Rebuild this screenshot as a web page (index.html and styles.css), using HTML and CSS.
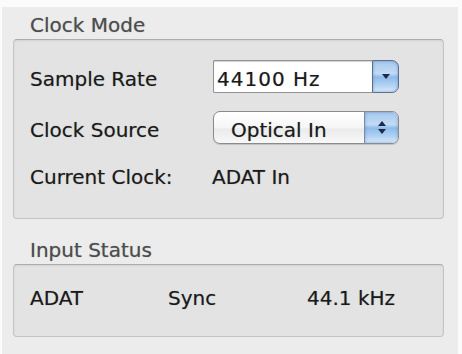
FILE: index.html
```html
<!DOCTYPE html>
<html lang="en">
<head>
    <meta charset="UTF-8">
    <meta name="viewport" content="width=device-width, initial-scale=1.0">
    <title>Clock Mode</title>
    <link rel="stylesheet" href="styles.css">
</head>
<body>
    <div class="panel">
        <div class="group-title">Clock Mode</div>
        <div class="group-box clock-box">
            <div class="field-row">
                <span class="label">Sample Rate</span>
                <div class="combo">
                    <span class="combo-value">44100 Hz</span>
                    <span class="aqua-btn combo-btn">
                        <svg width="8" height="5" viewBox="0 0 8 5"><polygon points="0,0 8,0 4,5" fill="#1c2a48"/></svg>
                    </span>
                </div>
            </div>
            <div class="field-row">
                <span class="label">Clock Source</span>
                <div class="popup">
                    <span class="popup-value">Optical In</span>
                    <span class="aqua-btn popup-btn">
                        <svg width="8" height="13" viewBox="0 0 8 13"><polygon points="0,5 8,5 4,0" fill="#1c2a48"/><polygon points="0,8 8,8 4,13" fill="#1c2a48"/></svg>
                    </span>
                </div>
            </div>
            <div class="field-row info-row">
                <span class="label">Current Clock:</span>
                <span class="value">ADAT In</span>
            </div>
        </div>

        <div class="group-title status-title">Input Status</div>
        <div class="group-box status-box">
            <span>ADAT</span>
            <span>Sync</span>
            <span>44.1 kHz</span>
        </div>
    </div>
</body>
</html>
```

FILE: styles.css
```css
* {
    box-sizing: border-box;
}

body {
    margin: 0;
    background: #fbfbfb;
    font-family: 'DejaVu Sans', 'Liberation Sans', sans-serif;
    font-size: 20px;
    line-height: 23px;
    color: #1a1a1a;
    text-shadow: 0 0 1px rgba(0, 0, 0, 0.35);
}

.panel {
    margin: 7px 0 0 2px;
    width: 456px;
    height: 347px;
    padding-top: 7px;
    background: #ececec;
}

.group-title {
    padding-left: 28px;
    margin-bottom: 2px;
    color: #4d4d4d;
}

.status-title {
    margin-top: 20px;
}

.group-box {
    margin-left: 11px;
    width: 431px;
    background: #e3e3e3;
    border: 1px solid #c4c4c4;
    border-top-color: #acacac;
    border-radius: 4px;
    box-shadow: inset 0 1px 2px rgba(0, 0, 0, 0.08);
}

.clock-box {
    display: flex;
    flex-direction: column;
    gap: 18px;
    padding: 20px 0 29px 16px;
}

.field-row {
    display: flex;
    align-items: baseline;
}

.label {
    width: 183px;
    flex-shrink: 0;
}

.info-row {
    padding-top: 4px;
}

.value {
    margin-left: -1px;
}

/* editable combo: white field + blue arrow cap */
.combo {
    display: flex;
    width: 186px;
    height: 33px;
}

.combo-value {
    flex: 1;
    padding: 7px 0 0 3px;
    background: #fff;
    border: 1px solid #939393;
    border-right: none;
    border-radius: 2px 0 0 2px;
    box-shadow: inset 0 1px 1px rgba(0, 0, 0, 0.18);
    letter-spacing: 1px;
}

.aqua-btn {
    display: flex;
    align-items: center;
    justify-content: center;
    background: linear-gradient(#a7c8ee 0%, #c2dbf5 40%, #8fbbea 52%, #b4d4f4 80%, #d8ebfc 100%);
}

.combo-btn {
    width: 27px;
    border: 1px solid #5e6f8c;
    border-radius: 0 7px 7px 0;
    box-shadow: inset 0 0 3px rgba(60, 100, 170, 0.5);
}

/* popup button */
.popup {
    display: flex;
    width: 186px;
    height: 33px;
    border: 1px solid #8b8b8b;
    border-radius: 7px;
    overflow: hidden;
    background: linear-gradient(#ffffff 0%, #f6f6f6 50%, #ebebeb 55%, #f8f8f8 100%);
    box-shadow: 0 1px 1px rgba(0, 0, 0, 0.15);
}

.popup-value {
    flex: 1;
    padding: 7px 0 0 17px;
}

.popup-btn {
    width: 34px;
    border-left: 1px solid #7d8ca6;
    box-shadow: inset 0 0 3px rgba(60, 100, 170, 0.5);
}

.status-box {
    display: grid;
    grid-template-columns: 138px 139px auto;
    padding: 22px 0 26px 16px;
}
```
